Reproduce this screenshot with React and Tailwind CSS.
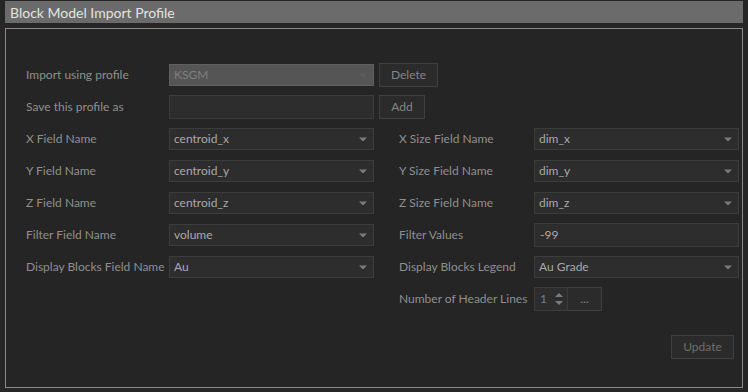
import React from 'react';

const font = { fontFamily: 'Lato, "Noto Sans", sans-serif' };

const Arrow = ({ dim }) => (
  <svg width="8" height="5" viewBox="0 0 8 5" className="shrink-0">
    <path d="M0 0.5 L8 0.5 L4 4.5 Z" fill={dim ? '#5f5f5f' : '#7c7c7c'} />
  </svg>
);

const Select = ({ value, disabled }) => (
  <div
    className={`w-[205px] h-[22px] flex items-center justify-between pl-[4px] pr-[6px] border ${
      disabled
        ? 'bg-[#555555] border-[#606060] text-[#7e7e7e]'
        : 'bg-[#2d2d2d] border-[#3c3c3c] text-[#a9a9a9]'
    }`}
  >
    <span>{value}</span>
    <Arrow dim={disabled} />
  </div>
);

const Input = ({ value, tall }) => (
  <div
    className={`w-[205px] ${tall ? 'h-[24px]' : 'h-[22px]'} flex items-center pl-[5px] bg-[#2d2d2d] border border-[#3c3c3c] text-[#a9a9a9]`}
  >
    {value}
  </div>
);

const Button = ({ children, w }) => (
  <div
    className={`${w} h-[24px] flex items-center justify-center bg-[#2b2b2b] border border-[#3f3f3f] text-[#858585]`}
  >
    {children}
  </div>
);

const Label = ({ children, w }) => (
  <div className={`${w} shrink-0 text-[#8f8f8f] whitespace-nowrap`}>{children}</div>
);

const Row = ({ children }) => <div className="h-[32px] flex items-center">{children}</div>;

const Pair = ({ left, leftControl, right, rightControl }) => (
  <Row>
    <Label w="w-[143px]">{left}</Label>
    {leftControl}
    {right && (
      <>
        <div className="w-[25px]" />
        <Label w="w-[135px]">{right}</Label>
        {rightControl}
      </>
    )}
  </Row>
);

export default function App() {
  return (
    <div className="w-[748px] h-[392px] bg-[#262626] pt-[1px] px-[5px] text-[12px]" style={font}>
      <div className="h-[22px] bg-[#6b6b6b] flex items-center pl-[5px] text-[14px] text-[#e2e2e2]">
        Block Model Import Profile
      </div>
      <div className="mt-[5px] h-[360px] border border-[#8a8a8a] bg-[#252525] pl-[20px] pt-[30px]">
        <Row>
          <Label w="w-[143px]">Import using profile</Label>
          <Select value="KSGM" disabled />
          <div className="w-[5px]" />
          <Button w="w-[59px]">Delete</Button>
        </Row>
        <Row>
          <Label w="w-[143px]">Save this profile as</Label>
          <Input value="" tall />
          <div className="w-[5px]" />
          <Button w="w-[46px]">Add</Button>
        </Row>
        <Pair
          left="X Field Name"
          leftControl={<Select value="centroid_x" />}
          right="X Size Field Name"
          rightControl={<Select value="dim_x" />}
        />
        <Pair
          left="Y Field Name"
          leftControl={<Select value="centroid_y" />}
          right="Y Size Field Name"
          rightControl={<Select value="dim_y" />}
        />
        <Pair
          left="Z Field Name"
          leftControl={<Select value="centroid_z" />}
          right="Z Size Field Name"
          rightControl={<Select value="dim_z" />}
        />
        <Pair
          left="Filter Field Name"
          leftControl={<Select value="volume" />}
          right="Filter Values"
          rightControl={<Input value="-99" tall />}
        />
        <Pair
          left="Display Blocks Field Name"
          leftControl={<Select value="Au" />}
          right="Display Blocks Legend"
          rightControl={<Select value="Au Grade" />}
        />
        <Row>
          <div className="w-[373px]" />
          <Label w="w-[135px]">Number of Header Lines</Label>
          <div className="h-[24px] flex">
            <div className="w-[34px] flex items-center justify-between pl-[5px] pr-[4px] bg-[#2d2d2d] border border-[#3c3c3c] text-[#6f8294]">
              <span>1</span>
              <svg width="8" height="14" viewBox="0 0 8 14">
                <path d="M0 5 L4 1 L8 5 Z" fill="#7c7c7c" />
                <path d="M0 9 L8 9 L4 13 Z" fill="#7c7c7c" />
              </svg>
            </div>
            <div className="w-[34px] flex items-center justify-center bg-[#2b2b2b] border border-l-0 border-[#3f3f3f] text-[#858585]">
              ...
            </div>
          </div>
        </Row>
        <div className="flex justify-end pr-[8px] mt-[20px]">
          <Button w="w-[63px]">
            <span className="text-[#6f6f6f]">Update</span>
          </Button>
        </div>
      </div>
    </div>
  );
}
